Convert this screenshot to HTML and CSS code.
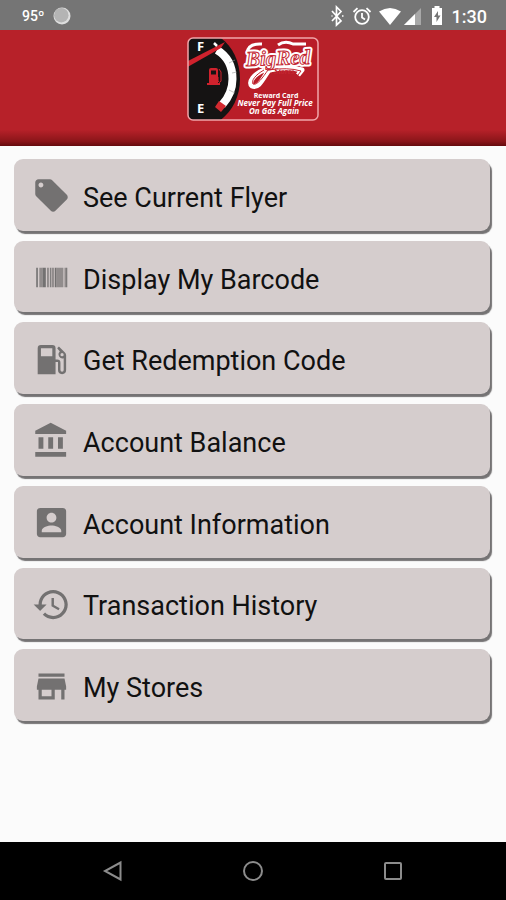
FILE: index.html
```html
<!DOCTYPE html>
<html lang="en">
<head>
<meta charset="utf-8">
<meta name="viewport" content="width=device-width, initial-scale=1">
<title>Rewards</title>
<link rel="stylesheet" href="styles.css">
</head>
<body>
<div class="status">
  <span class="temp">95º</span>
  <svg class="moon" viewBox="0 0 18 18" aria-hidden="true"><circle cx="9" cy="9" r="8.5" fill="#dedede"/><circle cx="8.3" cy="8.2" r="7.2" fill="#b4b4b4"/></svg>
  <span class="spacer"></span>
  <svg class="indicators" viewBox="0 0 116 22" aria-hidden="true">
    <path d="M2 6l9 10-4.500 4V2L11 6.500 2 16" fill="none" stroke="#fff" stroke-width="1.700"/>
    <path d="M1.500 11h1M12 11h1.500" stroke="#fff" stroke-width="1.600"/>
    <g fill="none" stroke="#fff" stroke-width="1.800"><circle cx="32" cy="12" r="6.800"/><path d="M32 8v4.500l3 2M23.500 7l4-3.800M40.500 7l-4-3.800"/></g>
    <path d="M49 6.500Q60 -.5 71 6.500L60 20z" fill="#fff"/>
    <path d="M74 20L91 3v17z" fill="#a8a8a8"/><path d="M74 20L85 9v11z" fill="#fff"/>
    <path d="M102 3h2.500V1h5v2h2.500v17h-10z" fill="#fff"/><path d="M108 6l-4 6h2.500v5l4-6.500H108z" fill="#757575"/>
  </svg>
  <time class="clock">1:30</time>
</div>
<header class="header">
  <svg class="logo" viewBox="0 0 134 86" role="img" aria-label="Big Red Stores reward card">
    <defs><clipPath id="card"><rect x="2" y="2" width="130" height="82" rx="5"/></clipPath></defs>
    <g clip-path="url(#card)">
      <rect width="134" height="86" fill="#b91d28"/>
      <path d="M0 0H32C45 8 54 24 54 43S45 77 32 86H0z" fill="#151313"/>
      <path d="M31 14C41 20 46.500 30 46.500 43C46.500 54 42.500 62 36 69" fill="none" stroke="#fff" stroke-width="8"/>
      <path d="M43 27l6-3M46 37l5-1M43 54l6 3" stroke="#999" stroke-width=".6"/>
      <path d="M29 71l4-6 7 5-5 6z" fill="#d42a30"/>
      <path d="M0 26L39 6l-4 6L0 32z" fill="#d0222d"/>
      <path d="M28 7l3 3" stroke="#fff" stroke-width="2.500"/>
      <path d="M23 34q0-2 2-2h5q2 0 2 2v13h2v2H21v-2h2z" fill="#d0222d"/><path d="M25 34.500h5v4h-5z" fill="#151313"/>
      <path d="M33 33l2 3v9q-1 3-3 0v-4" fill="none" stroke="#d0222d"/>
      <g class="gauge-text"><text x="11" y="15">F</text><text x="11" y="77">E</text></g>
      <g class="script">
        <path d="M78 34C68 38 62 46 66 50C73 53 77 42 83 34Q102 30 116 34l-4 5" fill="none" stroke="#fff" stroke-width="5" stroke-linejoin="round"/>
        <path d="M61 17Q62 7 76 8M92 9Q99 4 107 8L120 8" fill="none" stroke="#fff" stroke-width="3"/>
        <g transform="rotate(-2 91 24)"><text class="halo" x="60" y="29">BigRed</text><text class="face" x="60" y="29">BigRed</text></g>
        <path d="M78 34C69 39 65 45 67 48C71 50 77 41 82 34Q102 31 115 35l-3 4" fill="none" stroke="#c42732" stroke-width="1"/>
        <text class="stores" x="88" y="38">Stores</text>
      </g>
      <g class="tagline"><text class="small" x="90" y="62">Reward Card</text><text x="89" y="70">Never Pay Full Price</text><text x="88" y="78">On Gas Again</text></g>
    </g>
    <rect x="2" y="2" width="130" height="82" rx="5" fill="none" stroke="#f1a6aa" stroke-width="1.500"/>
  </svg>
</header>
<main class="menu">
  <button class="item" type="button"><svg viewBox="0 0 24 24" aria-hidden="true"><path d="M21.410 11.580l-9-9C12.050 2.220 11.550 2 11 2H4c-1.100 0-2 .9-2 2v7c0 .55.220 1.050.590 1.420l9 9c.360.360.860.580 1.410.580s1.050-.220 1.410-.590l7-7c.370-.360.590-.860.590-1.410s-.230-1.060-.590-1.420zM5.500 7C4.670 7 4 6.330 4 5.500S4.670 4 5.500 4 7 4.670 7 5.500 6.330 7 5.500 7z"/></svg><span>See Current Flyer</span></button>
  <button class="item" type="button"><svg viewBox="0 0 24 24" aria-hidden="true"><path d="M2.600 6h1v12h-1zM6.500 6h2v12h-2zM11 6h.6v12H11zM14 6h1v12h-1zM21 6h.7v12H21z"/><path opacity=".7" d="M4.500 6h2v12h-2zM9.200 6h1.200v12H9.200zM12 6h1.500v12H12zM15 6h4.300v12H15zM20 6h1v12h-1z"/></svg><span>Display My Barcode</span></button>
  <button class="item" type="button"><svg viewBox="0 0 24 24" aria-hidden="true"><path fill-rule="evenodd" d="M5.500 3h7q2 0 2 2v7h1q2 0 2 2v4.500a1 1 0 0 0 2 0v-7.200a2.500 2.500 0 0 1-2.400-4.200L15.500 5l1.060-1.060 3.700 3.700Q21 8.400 21 9.400v9.100a2.500 2.500 0 0 1-5 0v-5H14.500V21H3.500V5Q3.500 3 5.500 3zM5.500 5v5h7V5zM18.500 8a1 1 0 1 0 0 2 1 1 0 0 0 0-2z"/></svg><span>Get Redemption Code</span></button>
  <button class="item" type="button"><svg viewBox="0 0 24 24" aria-hidden="true"><path d="M4 10v7h3v-7H4zm6 0v7h3v-7h-3zM2 22h19v-3H2v3zm14-12v7h3v-7h-3zm-4.500-9L2 6v2h19V6l-9.500-5z"/></svg><span>Account Balance</span></button>
  <button class="item" type="button"><svg viewBox="0 0 24 24" aria-hidden="true"><path d="M3 5v14c0 1.100.890 2 2 2h14c1.100 0 2-.9 2-2V5c0-1.100-.9-2-2-2H5c-1.110 0-2 .9-2 2zm12 4c0 1.660-1.340 3-3 3s-3-1.340-3-3 1.340-3 3-3 3 1.340 3 3zm-9 8c0-2 4-3.100 6-3.100s6 1.100 6 3.100v1H6v-1z"/></svg><span>Account Information</span></button>
  <button class="item" type="button"><svg viewBox="0 0 24 24" aria-hidden="true"><path d="M13 3c-4.970 0-9 4.030-9 9H1l3.890 3.890.070.140L9 12H6c0-3.870 3.130-7 7-7s7 3.130 7 7-3.130 7-7 7c-1.930 0-3.680-.790-4.940-2.060l-1.420 1.420C8.270 19.990 10.510 21 13 21c4.970 0 9-4.030 9-9s-4.030-9-9-9zm-1 5v5l4.280 2.540.720-1.210-3.500-2.080V8H12z"/></svg><span>Transaction History</span></button>
  <button class="item" type="button"><svg viewBox="0 0 24 24" aria-hidden="true"><path d="M20 4H4v2h16V4zm1 10v-2l-1-5H4l-1 5v2h1v6h10v-6h4v6h2v-6h1zm-9 4H6v-4h6v4z"/></svg><span>My Stores</span></button>
</main>
<nav class="navbar" aria-label="System">
  <button type="button" aria-label="Back"><svg viewBox="0 0 24 24"><path d="M19.500 3.500v17L4 12z"/></svg></button>
  <button type="button" aria-label="Home"><svg viewBox="0 0 24 24"><circle cx="12" cy="12" r="9"/></svg></button>
  <button type="button" aria-label="Recent apps"><svg viewBox="0 0 24 24"><rect x="4" y="4" width="16" height="16" rx="1"/></svg></button>
</nav>
</body>
</html>
```
FILE: styles.css
```css
* { box-sizing: border-box; }
body {
  margin: 0;
  min-height: 100vh;
  display: flex;
  flex-direction: column;
  background: #fbfbfb;
  font-family: Roboto, "Liberation Sans", sans-serif;
}
.status {
  height: 30px;
  flex: none;
  display: flex;
  align-items: center;
  padding: 2px 19px 0 22px;
  background: #757575;
  color: #fff;
}
.temp { font-size: 14px; font-weight: 500; }
.moon { width: 18px; height: 18px; margin-left: 9px; }
.spacer { flex: 1; }
.indicators { width: 116px; height: 22px; margin-right: 6px; }
.clock { font-size: 18px; font-weight: 500; }
.header {
  height: 116px;
  flex: none;
  display: flex;
  justify-content: center;
  align-items: flex-start;
  padding-top: 6px;
  background: linear-gradient(#b72129 0, #b72129 86%, #8a1519 96%, #650b0e 100%);
}
.logo { width: 134px; height: 86px; }
.logo text { fill: #fff; font-family: "Open Sans", sans-serif; font-weight: 700; }
.logo .gauge-text text { font-size: 13px; }
.logo .script text { font-family: "Liberation Serif", serif; font-style: italic; font-size: 21px; }
.logo .script .halo { stroke: #fff; stroke-width: 5px; stroke-linejoin: round; }
.logo .script .face { fill: #fff; stroke: #c42732; stroke-width: 1px; }
.logo .script .stores { font-size: 8px; fill: #c42732; }
.logo .tagline text { font-size: 8px; font-style: italic; font-weight: 700; text-anchor: middle; }
.logo .tagline .small { font-size: 7px; font-style: normal; }
.menu {
  min-height: 562px;
  margin: 13px 16px 24px 14px;
  display: grid;
  grid-auto-rows: 1fr;
  gap: 10px;
}
.item {
  display: flex;
  align-items: center;
  gap: 12px;
  padding: 2px 18px 0;
  border: 0;
  border-radius: 9px;
  background: #d5cdcd;
  box-shadow: 2px 3px 1px #757374;
  color: #111;
  font: 400 27px/36px Roboto, "Liberation Sans", sans-serif;
  text-align: left;
}
.item svg { width: 39px; height: 39px; flex: none; fill: #737171; }
.item span { padding-top: 4px; }
.navbar {
  height: 58px;
  flex: none;
  margin-top: auto;
  display: flex;
  justify-content: center;
  gap: 36px;
  align-items: center;
  background: #000;
}
.navbar button {
  width: 104px;
  height: 48px;
  padding: 0;
  border: 0;
  background: none;
  display: grid;
  place-items: center;
}
.navbar svg { width: 24px; height: 24px; fill: none; stroke: #8c8c8c; stroke-width: 2px; }
```
